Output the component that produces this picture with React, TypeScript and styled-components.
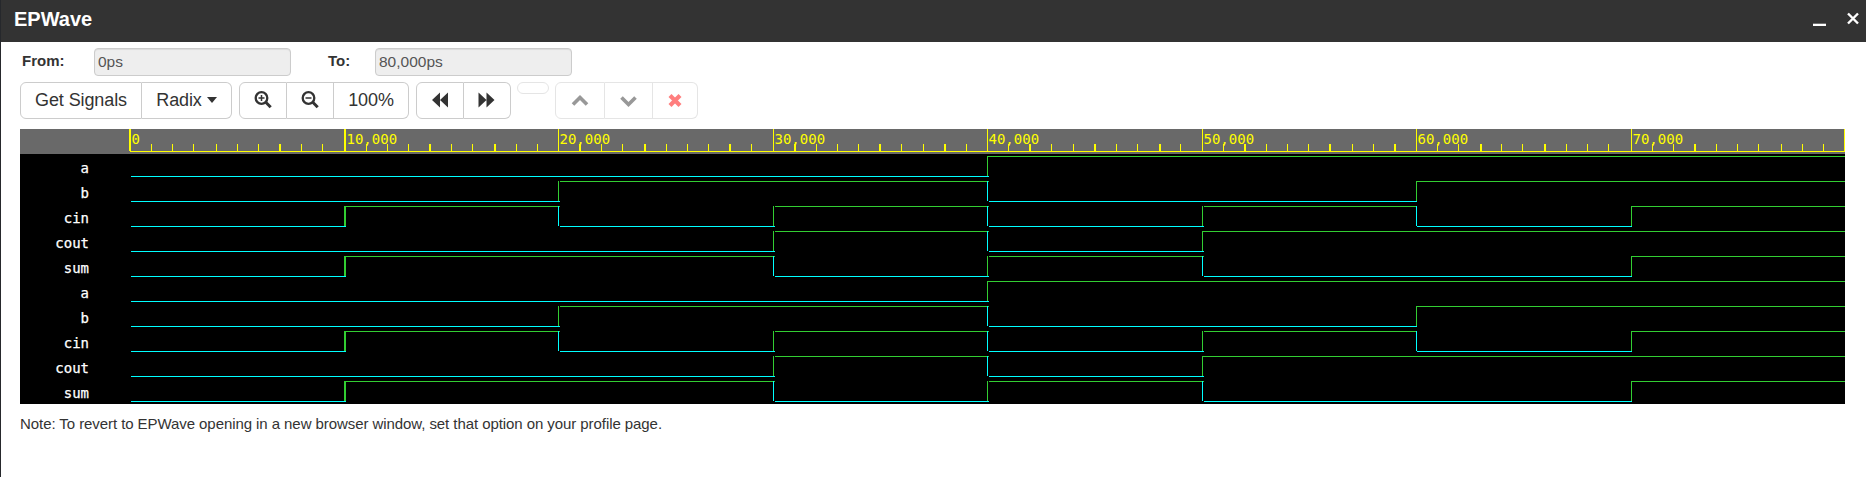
import React from "react";
import styled, { createGlobalStyle } from "styled-components";

const Global = createGlobalStyle`
  * { box-sizing: border-box; }
  body { margin: 0; background: #fff; color: #333; font-family: "Liberation Sans", Arial, sans-serif; font-size: 15px; overflow: hidden; }
`;

const Window = styled.div`
  height: 477px;
  border-left: 1px solid #26282c;
  background: #fff;
`;

const TitleBar = styled.header`
  height: 42px;
  padding: 0 6px 4px 13px;
  display: flex;
  align-items: center;
  justify-content: space-between;
  background: #333;
  color: #fff;
`;

const Title = styled.h1`
  margin: 0;
  font-size: 20px;
  line-height: 38px;
  font-weight: bold;
`;

const WindowControls = styled.div`
  display: flex;
  gap: 20px;
`;

const Content = styled.main`
  padding: 6px 20px 0 19px;
`;

const RangeRow = styled.div`
  height: 28px;
  display: flex;
  align-items: center;
`;

const RangeLabel = styled.label<{ $width: number }>`
  width: ${(p) => p.$width}px;
  padding: 0 0 3px 2px;
  font-weight: bold;
`;

const RangeInput = styled.input<{ $gap?: number }>`
  width: 197px;
  height: 28px;
  margin: 0 ${(p) => p.$gap ?? 0}px 0 0;
  padding: 0 3px;
  border: 1px solid #ccc;
  border-radius: 4px;
  background: #eee;
  box-shadow: inset 0 1px 1px rgba(0, 0, 0, 0.075);
  color: #555;
  font: 15.5px "Liberation Sans", Arial, sans-serif;
`;

const Toolbar = styled.div`
  display: flex;
  align-items: flex-start;
  margin-top: 6px;
  height: 37px;
`;

const Group = styled.div<{ $gap: number }>`
  display: flex;
  margin-right: ${(p) => p.$gap}px;
`;

const Button = styled.button<{ $width: number; $height?: number; $faded?: boolean }>`
  width: ${(p) => p.$width}px;
  height: ${(p) => p.$height ?? 37}px;
  padding: 0 0 1px;
  display: flex;
  align-items: center;
  justify-content: center;
  gap: 5px;
  border: 1px solid #ccc;
  background: #fff;
  color: #333;
  opacity: ${(p) => (p.$faded ? 0.5 : 1)};
  font: 18px "Liberation Sans", Arial, sans-serif;
  letter-spacing: -0.1px;
  & + & { border-left: 0; }
  &:first-child { border-top-left-radius: 6px; border-bottom-left-radius: 6px; }
  &:last-child { border-top-right-radius: 6px; border-bottom-right-radius: 6px; }
`;

const ButtonText = styled.span`
  padding-top: 1px;
`;

const Caret = styled.span`
  border: 5px solid transparent;
  border-top: 6px solid #333;
  border-bottom: 0;
`;

const Icon = styled.svg`
  display: block;
`;

const Viewer = styled.section`
  width: 1825px;
  margin-top: 10px;
  background: #000;
`;

const Chart = styled.svg`
  display: block;
  font-family: "DejaVu Sans Mono", monospace;
  shape-rendering: crispEdges;
`;

const Note = styled.p`
  margin: 11px 0 0;
  line-height: 18px;
  letter-spacing: -0.07px;
`;

const MAJOR = [109, 324, 538, 753, 967, 1182, 1396, 1611, 1824];

const MINOR = [
  131, 152, 173, 196, 217, 238, 259, 281, 302,
  346, 367, 388, 409, 431, 452, 474, 496, 517,
  559, 581, 602, 624, 646, 667, 688, 709, 731,
  774, 796, 817, 838, 859, 881, 903, 924, 946,
  988, 1009, 1031, 1053, 1074, 1096, 1117, 1139, 1160,
  1203, 1224, 1246, 1267, 1288, 1309, 1332, 1353, 1374,
  1417, 1438, 1460, 1481, 1502, 1524, 1546, 1567, 1588,
  1632, 1653, 1674, 1696, 1717, 1738, 1761, 1782, 1803,
];
const WIDE = new Set([109, 259, 324, 409, 474, 559, 624, 709, 774, 859, 924, 1009, 1074, 1139, 1224, 1309, 1374, 1460, 1524, 1674]);
const tickWidth = (x: number) => (WIDE.has(x) ? 2 : 1);

const signals = [
  { name: "a", bits: "00001111" },
  { name: "b", bits: "00110011" },
  { name: "cin", bits: "01010101" },
  { name: "cout", bits: "00010111" },
  { name: "sum", bits: "01101001" },
];
const rows = [...signals, ...signals];

const HIGH = "#32cd32";
const LOW = "#00ffff";
const WAVE_START = 111;
const WAVE_END = 1825;

function Ruler() {
  return (
    <g>
      <rect width={1825} height={25} fill="#696969" />
      <g fill="#ffff00">
        <rect x={110} y={22} width={1715} height={1} />
        {MINOR.map((x) => (
          <rect key={x} x={x} y={15} width={tickWidth(x)} height={8} />
        ))}
        {MAJOR.map((x) => (
          <rect key={x} x={x} y={0} width={tickWidth(x)} height={22} />
        ))}
        {MAJOR.slice(0, 8).map((x, i) => (
          <text key={x} x={x + tickWidth(x) + 0.5} y={15} fontSize={14}>
            {i === 0 ? "0" : `${i}0,000`}
          </text>
        ))}
      </g>
    </g>
  );
}

function Wave({ bits, top }: { bits: string; top: number }) {
  // Horizontal runs begin and end slightly after the transition they belong to.
  const joint = (i: number) => MAJOR[i] + (i >= 6 ? 1 : 2);
  const runs: { from: number; to: number; high: boolean }[] = [];
  bits.split("").forEach((bit, i) => {
    const last = runs[runs.length - 1];
    if (last && last.high === (bit === "1")) last.to = i + 1;
    else runs.push({ from: i, to: i + 1, high: bit === "1" });
  });
  return (
    <g>
      {runs.map(({ from, to, high }) => {
        const final = to === bits.length;
        const touching = final || from === 1;
        const start = from === 0 ? WAVE_START : touching ? MAJOR[from] : joint(from);
        const end = final ? WAVE_END : joint(to);
        return (
          <g key={from} fill={high ? HIGH : LOW}>
            <rect x={start} y={top + (high ? 2 : 22)} width={end - start} height={1} />
            {from > 0 && <rect x={MAJOR[from]} y={top + 2} width={tickWidth(MAJOR[from])} height={20} />}
          </g>
        );
      })}
    </g>
  );
}

export default function App() {
  return (
    <>
      <Global />
      <Window>
        <TitleBar>
          <Title>EPWave</Title>
          <WindowControls>
            <Icon width="14" height="14" viewBox="0 0 14 14"><path d="M1 13h13" stroke="#fff" strokeWidth="2.6" /></Icon>
            <Icon width="14" height="14" viewBox="0 0 14 14"><path d="M2 1.5l10 10M12 1.5L2 11.5" stroke="#fff" strokeWidth="2.4" /></Icon>
          </WindowControls>
        </TitleBar>
        <Content>
          <RangeRow>
            <RangeLabel $width={74}>From:</RangeLabel>
            <RangeInput value="0ps" disabled readOnly $gap={35} />
            <RangeLabel $width={49}>To:</RangeLabel>
            <RangeInput value="80,000ps" disabled readOnly />
          </RangeRow>
          <Toolbar>
            <Group $gap={7}>
              <Button $width={122}><ButtonText>Get Signals</ButtonText></Button>
              <Button $width={90}><ButtonText>Radix</ButtonText><Caret /></Button>
            </Group>
            <Group $gap={7}>
              {["M7 4v6M4 7h6", "M4 7h6"].map((d) => (
                <Button key={d} $width={d.length > 6 ? 48 : 47} aria-label="Zoom">
                  <Icon width="18" height="18" viewBox="0 0 18 18" fill="none" stroke="#333">
                    <circle cx="7.5" cy="7" r="5.8" strokeWidth="2.3" />
                    <path d="M11.8 11.3l4.9 4.9" strokeWidth="3" />
                    <path d={d} transform="translate(.5 0)" strokeWidth="1.5" />
                  </Icon>
                </Button>
              ))}
              <Button $width={75}><ButtonText>100%</ButtonText></Button>
            </Group>
            <Group $gap={6}>
              <Button $width={48} aria-label="Back">
                <Icon width="18" height="18" viewBox="0 0 18 18" fill="#333"><path d="M1 9l8-7.5v15zM9 9l8-7.5v15z" /></Icon>
              </Button>
              <Button $width={47} aria-label="Forward">
                <Icon width="18" height="18" viewBox="0 0 18 18" fill="#333"><path d="M.5 1.5l8 7.5-8 7.5zM8.5 1.5l8 7.5-8 7.5z" /></Icon>
              </Button>
            </Group>
            <Group $gap={6}>
              <Button $width={32} $height={12} $faded aria-label="Empty" />
            </Group>
            <Group $gap={0}>
              <Button $width={50} $faded aria-label="Up">
                <Icon width="18" height="18" viewBox="0 0 18 18" fill="none" stroke="#333" strokeWidth="3.6"><path d="M2 13.5l7-7 7 7" /></Icon>
              </Button>
              <Button $width={48} $faded aria-label="Down">
                <Icon width="18" height="18" viewBox="0 0 18 18" fill="none" stroke="#333" strokeWidth="3.6"><path d="M1.5 6.5l7 7 7-7" /></Icon>
              </Button>
              <Button $width={45} $faded aria-label="Remove">
                <Icon width="18" height="18" viewBox="0 0 18 18" stroke="red" strokeWidth="4.2"><path d="M4 4.5l10 10M14 4.5l-10 10" /></Icon>
              </Button>
            </Group>
          </Toolbar>
          <Viewer>
            <Chart width={1825} height={275}>
              <Ruler />
              {rows.map((row, i) => (
                <g key={i}>
                  <text x={69} y={44 + i * 25} fill="#fff" stroke="#fff" strokeWidth={0.25} fontSize={14} textAnchor="end">{row.name}</text>
                  <Wave bits={row.bits} top={25 + i * 25} />
                </g>
              ))}
            </Chart>
          </Viewer>
          <Note>Note: To revert to EPWave opening in a new browser window, set that option on your profile page.</Note>
        </Content>
      </Window>
    </>
  );
}
